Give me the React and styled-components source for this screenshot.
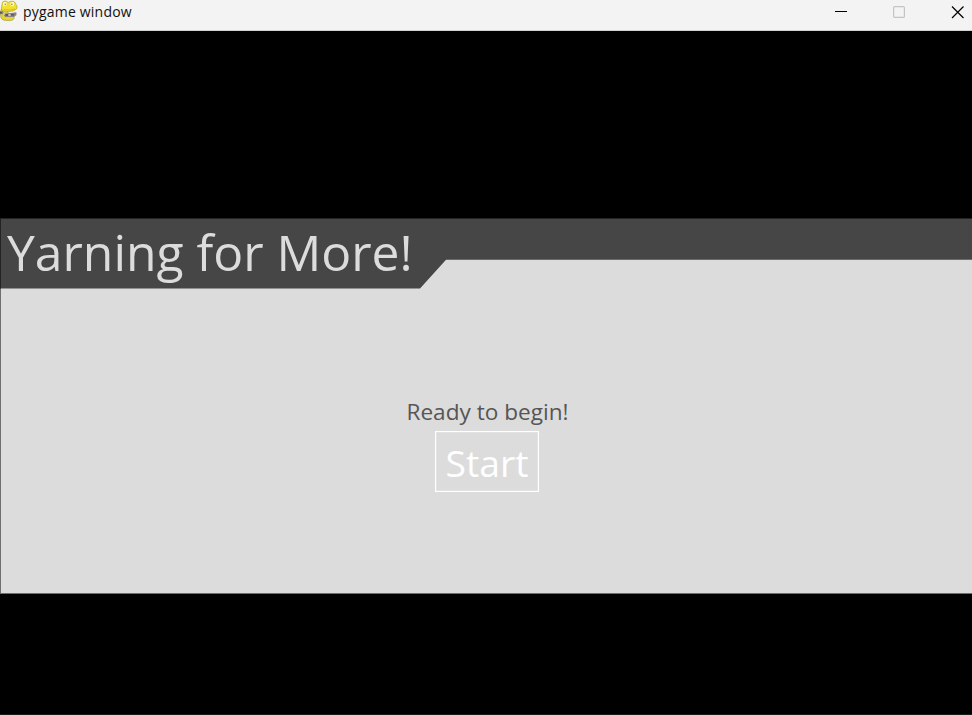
import React from "react";
import styled, { createGlobalStyle } from "styled-components";

const GlobalStyle = createGlobalStyle`
  * { box-sizing: border-box; }
  html, body { margin: 0; padding: 0; background: #000; overflow: hidden; }
`;

const Window = styled.div`
  width: 972px;
  height: 715px;
  display: flex;
  flex-direction: column;
  background: #000;
  border-bottom: 1px solid #1c1c1c;
  font-family: "Open Sans", "Noto Sans", sans-serif;
`;

const TitleBar = styled.header`
  height: 31px;
  flex: none;
  display: flex;
  align-items: flex-start;
  justify-content: space-between;
  background: #f3f3f3;
  border-bottom: 1px solid #d0d0d0;
`;

const Caption = styled.div`
  display: flex;
  align-items: flex-start;
  gap: 5px;
`;

const CaptionText = styled.span`
  height: 24px;
  line-height: 24px;
  font-size: 14px;
  letter-spacing: 0.2px;
  color: #111;
  white-space: nowrap;
`;

const Controls = styled.div`
  display: flex;
  height: 24px;
  align-items: center;
  gap: 45px;
  padding-right: 8px;
`;

const ControlButton = styled.button`
  display: flex;
  padding: 0;
  border: 0;
  background: none;
  color: ${(p) => (p.$muted ? "#c4c4c4" : "#000")};
`;

const Stage = styled.main`
  flex: 1;
  display: flex;
  flex-direction: column;
  padding-top: 187px;
`;

const Screen = styled.section`
  height: 376px;
  display: flex;
  flex-direction: column;
  background: #dcdcdc;
  border: solid #6e6e6e;
  border-width: 0 0 1px 1px;
`;

const Banner = styled.div`
  height: 71px;
  flex: none;
  margin-left: -1px;
  padding-left: 6px;
  background: #464646;
  border-top: 1px solid #232323;
  border-left: 1px solid #232323;
  clip-path: polygon(0 0, 100% 0, 100% 41.7px, 446px 41.7px, 420px 70.6px, 0 70.6px);
`;

const Heading = styled.h1`
  margin: 0;
  font-size: 49.8px;
  line-height: 67px;
  font-weight: 400;
  color: #dcdcdc;
  white-space: nowrap;
`;

const Prompt = styled.div`
  display: flex;
  flex-direction: column;
  align-items: center;
  padding-top: 107px;
  padding-left: 1px;
`;

const Message = styled.p`
  margin: 0;
  height: 35px;
  padding-left: 1px;
  font-size: 22.6px;
  line-height: 31px;
  color: #565656;
  white-space: nowrap;
`;

const StartButton = styled.button`
  width: 104px;
  height: 61px;
  padding: 3px 0 0;
  border: 1px solid #fff;
  background: transparent;
  color: #fff;
  font-family: inherit;
  font-size: 37.3px;
  line-height: 56px;
  box-shadow: inset 0 0 0 0.5px rgba(255, 255, 255, 0.4);
`;

function SnakeIcon() {
  return (
    <svg width="18" height="24" viewBox="0 0 18 24">
      <path d="M1 9.5 Q0 14 1 18 Q2 20.500 7 20.500 Q13 21 14 18.500 L14 15 L8 13 L7 9Z" fill="#e6d42e" stroke="#9c8e2a" strokeWidth=".6" />
      <path d="M2 4.500 Q2 1 5 1 Q7 1 8.300 2.500 Q10 0.800 13 1.300 Q15.500 2 16 4.500 Q18 6.500 16.500 9 Q14 11.800 8 11.500 Q2 11.500 1.500 9 Q1.300 7 2 4.500Z" fill="#f2e02f" stroke="#a6982a" strokeWidth=".6" />
      <circle cx="4.800" cy="4" r="1.900" fill="#fffbd8" />
      <circle cx="12.300" cy="4" r="2" fill="#fffbd8" />
      <circle cx="5.200" cy="4.300" r=".7" fill="#776d36" />
      <circle cx="11.900" cy="4.300" r=".7" fill="#776d36" />
      <path d="M4 9.500 Q9 11 15 9" fill="none" stroke="#b3a42e" strokeWidth=".6" />
      <path d="M0 11 L2.500 11 L5 13.500 L15.500 12.500 L16.500 15 L14 17 L5 17 L3.500 14.500 L0 14Z" fill="#8c8581" />
      <path d="M0 12h2v1.500H0zM5.500 14h2.500v2H5.500zM11 14h3v1.500h-3z" fill="#5d5755" />
      <path d="M3 12.500h1.800v2.500H3zM8.500 14h2v2h-2z" fill="#ccc5c2" />
      <path d="M14.500 12.500h2v1.800h-2z" fill="#a87870" />
    </svg>
  );
}

export default function App() {
  return (
    <>
      <GlobalStyle />
      <Window>
        <TitleBar>
          <Caption>
            <SnakeIcon />
            <CaptionText>pygame window</CaptionText>
          </Caption>
          <Controls>
            <ControlButton aria-label="Minimize">
              <svg width="13" height="13"><path d="M0 5.500h12" stroke="currentColor" /></svg>
            </ControlButton>
            <ControlButton aria-label="Maximize" $muted>
              <svg width="13" height="13"><rect x="0.600" y="0.600" width="10.800" height="10.800" rx="1" fill="none" stroke="currentColor" strokeWidth="1.2" /></svg>
            </ControlButton>
            <ControlButton aria-label="Close">
              <svg width="13" height="13"><path d="M1 0.500L12.500 12M12.500 0.500L1 12" stroke="currentColor" strokeWidth="1.2" /></svg>
            </ControlButton>
          </Controls>
        </TitleBar>
        <Stage>
          <Screen>
            <Banner>
              <Heading>Yarning for More!</Heading>
            </Banner>
            <Prompt>
              <Message>Ready to begin!</Message>
              <StartButton>Start</StartButton>
            </Prompt>
          </Screen>
        </Stage>
      </Window>
    </>
  );
}
